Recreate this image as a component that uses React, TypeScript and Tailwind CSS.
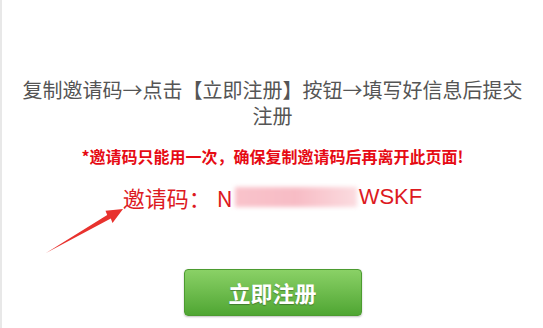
export default function App() {
  return (
    <div className="relative w-[543px] h-[328px] bg-white border-l-2 border-[#e8e8e8] overflow-hidden font-['Noto_Sans_CJK_SC',sans-serif]">
      <div className="flex flex-col items-center pt-[77px]">
        <p className="w-[504px] text-center text-[20px] leading-[26px] text-[#555]">
          复制邀请码→点击【立即注册】按钮→填写好信息后提交注册
        </p>
        <p className="mt-[16px] text-[16px] leading-[22px] font-bold text-[#e60b14]">
          *邀请码只能用一次，确保复制邀请码后再离开此页面!
        </p>
        <div className="mt-[15px] flex items-center text-[22px] leading-[30px] text-[#dd1a1f]">
          <span>邀请码：</span>
          <span className="ml-[6px]">N</span>
          <span className="inline-block w-[122px] h-[20px] ml-[2px] mr-[2px] blur-[2px] bg-gradient-to-r from-[#f9c3cb] via-[#f7bcc5] to-[#fbdce0]" />
          <span className="font-['Liberation_Sans',sans-serif]">WSKF</span>
        </div>
        <button className="mt-[57px] w-[178px] h-[47px] rounded-[4px] border border-[#4c9b30] bg-gradient-to-b from-[#8ad166] to-[#4fa632] shadow-[0_1px_2px_rgba(0,0,0,0.25)] text-white text-[22px] font-bold [text-shadow:0_1px_1px_rgba(0,0,0,0.3)]">
          立即注册
        </button>
      </div>
      <svg className="absolute left-0 top-0" width="543" height="328" viewBox="0 0 543 328">
        <path d="M44 253 L105.2 215.1 L103.5 210.8 L121 209 L110.5 223 L108.8 218.6 Z" fill="#e8322e" />
      </svg>
    </div>
  );
}
